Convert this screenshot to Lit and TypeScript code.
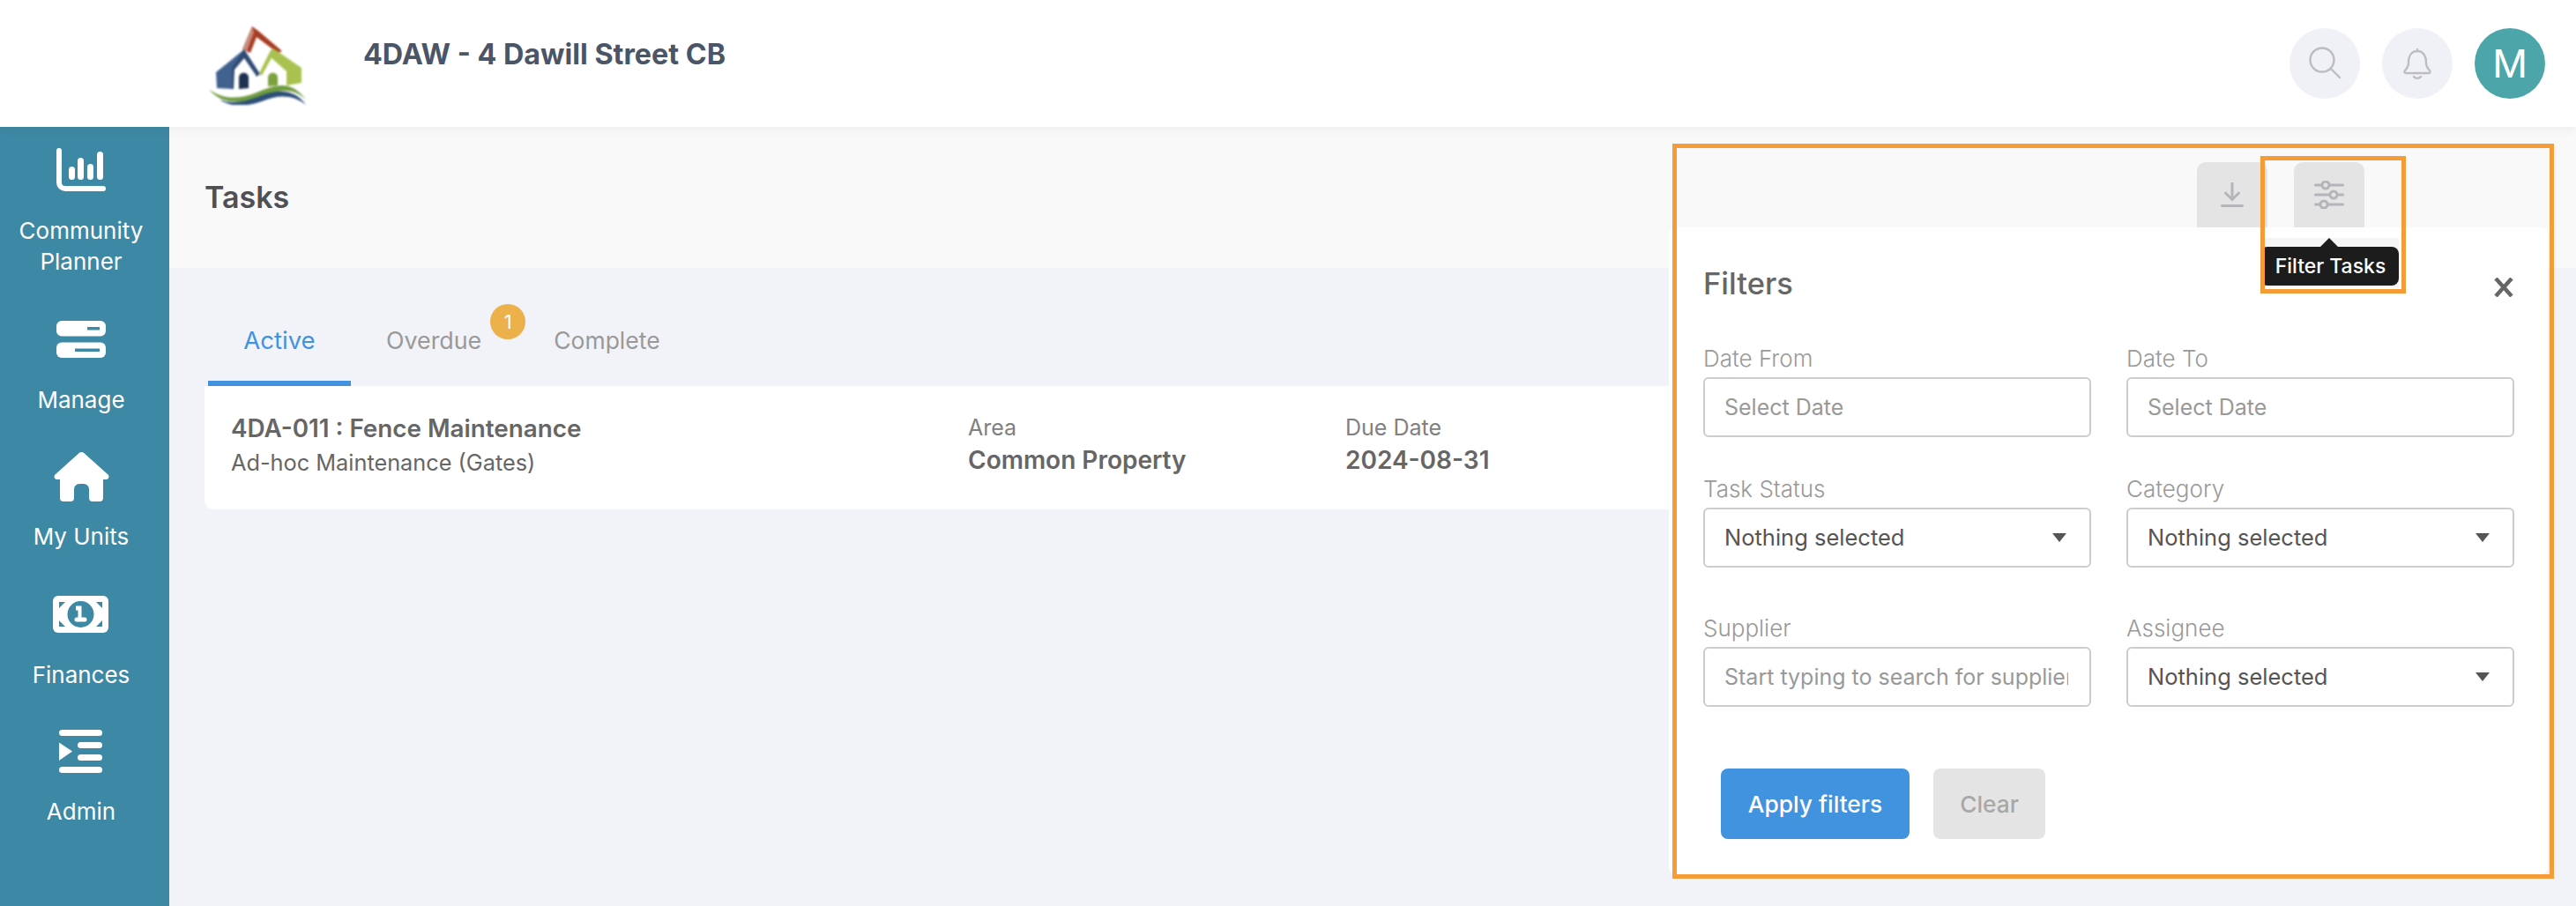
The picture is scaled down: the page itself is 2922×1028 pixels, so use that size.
import { LitElement, html, css, svg } from "lit";
import { customElement } from "lit/decorators.js";

const icons = {
  planner: svg`<svg class="ic" style="width:56px;height:49px" viewBox="0 0 56 49" fill="#fff">
    <path d="M0 3a3 3 0 0 1 6 0v36a4 4 0 0 0 4 4h43a3 3 0 0 1 0 6H10A10 10 0 0 1 0 39Z"/>
    <rect x="14" y="21" width="7" height="15" rx="3.5"/><rect x="24" y="11" width="7" height="25" rx="3.5"/>
    <rect x="35" y="18" width="7" height="18" rx="3.5"/><rect x="46" y="4" width="7" height="32" rx="3.5"/></svg>`,
  manage: svg`<svg class="ic" style="width:56px;height:42px" viewBox="0 0 56 42">
    <rect width="56" height="17.5" rx="6" fill="#fff"/><rect y="24.5" width="56" height="17.5" rx="6" fill="#fff"/>
    <rect x="35" y="7" width="14" height="3.5" fill="#3d88a4"/><rect x="21" y="31.5" width="28" height="3.5" fill="#3d88a4"/></svg>`,
  home: svg`<svg class="ic" style="width:63px;height:56px" viewBox="0 0 63 56" fill="#fff">
    <path d="M28.8 1a4 4 0 0 1 5.4 0L61.5 25.5C63.5 27.4 62.3 31 59.5 31H56V52a4 4 0 0 1-4 4H44a4 4 0 0 1-4-4V42a6 6 0 0 0-6-6H29a6 6 0 0 0-6 6V52a4 4 0 0 1-4 4H11a4 4 0 0 1-4-4V31H3.5C.7 31-.5 27.4 1.5 25.5Z"/></svg>`,
  money: svg`<svg class="ic" style="width:63px;height:42px" viewBox="0 0 63 42">
    <rect width="63" height="42" rx="6" fill="#fff"/>
    <circle cx="31.5" cy="21" r="15" fill="#3d88a4"/>
    <path d="M7 7h7l-7 7ZM56 7v7l-7-7ZM7 35v-7l7 7ZM56 35h-7l7-7Z" fill="#3d88a4"/>
    <path d="M26 12h6.500V25h3.500a2.500 2.500 0 0 1 0 5H27a2.500 2.500 0 0 1 0-5h1.500v-8H26Z" fill="#fff" transform="translate(0 -.5)"/></svg>`,
  admin: svg`<svg class="ic" style="width:49px;height:49px" viewBox="0 0 49 49" fill="#fff">
    <rect width="49" height="7" rx="3.5"/><rect x="21" y="14" width="28" height="7" rx="3.5"/>
    <rect x="21" y="28" width="28" height="7" rx="3.5"/><rect y="42" width="49" height="7" rx="3.5"/>
    <path d="M0 14.500 15 24.500 0 35Z"/></svg>`,
};

const logo = svg`<svg class="logo" viewBox="0 0 110 90">
  <path d="M49 1 56 6 83 29 78 31 54 13 47 31 38 27Z" fill="#a63c22"/>
  <path d="M49 1 38 27 43 29 51 8Z" fill="#c98a7a"/>
  <path d="M40 27 8 53 9 71 27 72 27 50 42 33Z" fill="#41628f"/>
  <path d="M40 27 58 55 54 58 40 37 29 50 28 72H26V48Z" fill="#2f4a74"/>
  <path d="M40 38 53 56 53 71 29 73 29 52Z" fill="#fff"/>
  <path d="M34 72V59a5.500 5.500 0 0 1 11 0V71Z" fill="#1d3150"/>
  <path d="M70 28 57 54 60 57 71 37 88 52 88 68 105 65V48L73 26Z" fill="#a9c24f"/>
  <path d="M71 37 87 52V66L60 70 60 57Z" fill="#fff"/>
  <path d="M67 69V59a5.500 5.500 0 0 1 11 0V68Z" fill="#7ba23c"/>
  <path d="M0 72C14 84 34 84 54 76 74 68 92 60 110 84 94 68 76 74 56 82 34 90 12 88 0 72Z" fill="#6f9c3f"/>
  <path d="M12 84C28 90 42 86 60 79 78 72 98 72 110 90 96 78 78 78 60 86 40 93 24 92 12 84Z" fill="#2d4f78"/>
</svg>`;

@customElement("app-root")
export class AppRoot extends LitElement {
  static styles = css`
    :host { display: block; width: 2922px; height: 1028px; overflow: hidden; position: relative; font-family: Inter, "Liberation Sans", sans-serif; background: #f1f3f8; }
    * { box-sizing: border-box; }
    .top { height: 144px; background: #fff; display: flex; align-items: center; padding: 0 35px 0 237px; box-shadow: 0 2px 12px rgba(0,0,0,.06); position: relative; z-index: 2; }
    .logo { width: 110px; height: 90px; filter: blur(.8px); margin-top: 4px; }
    .brand { margin-left: 65px; margin-bottom: 22px; font-size: 32.3px; font-weight: 700; color: #4a5568; white-space: nowrap; }
    .spacer { flex: 1; }
    .circle { width: 80px; height: 80px; border-radius: 50%; background: #f0f1f7; margin-left: 25px; display: flex; align-items: center; justify-content: center; }
    .circle svg { fill: none; stroke: #bdbdc0; stroke-width: 2.4; stroke-linecap: round; stroke-linejoin: round; width: 40px; height: 40px; }
    .avatar { background: #4ca5a9; color: #fff; font-size: 44px; font-weight: 400; }
    .body { display: flex; height: 884px; }
    .side { width: 192px; background: #3d88a4; display: flex; flex-direction: column; align-items: center; padding-right: 8px; color: #fff; font-size: 26px; line-height: 35px; text-align: center; }
    .nav { display: flex; flex-direction: column; align-items: center; }
    .nav .ic { display: block; }
    .nav span { display: block; white-space: nowrap; }
    .n1 { padding-top: 24px; } .n1 span { margin-top: 26.5px; }
    .n2 { padding-top: 50.5px; } .n2 span { margin-top: 29.5px; }
    .n3 { padding-top: 42.5px; } .n3 span { margin-top: 22px; }
    .n4 { padding-top: 50px; } .n4 span { margin-top: 29.5px; }
    .n5 { padding-top: 45.5px; } .n5 span { margin-top: 26px; }
    .main { flex: 1; min-width: 0; }
    .phead { height: 160px; background: #f9f9f9; padding: 60px 40px 0; font-size: 34px; font-weight: 600; color: #4f5055; line-height: 40px; }
    .tabs { display: flex; padding: 40px 0 0 44px; height: 134px; align-items: stretch; }
    .tab { position: relative; font-size: 26.5px; color: #999; padding: 24px 41px 0; border-bottom: 6px solid transparent; line-height: 36px; white-space: nowrap; }
    .tab.on { width: 162px; padding: 24px 0 0; text-align: center; font-size: 27.5px; color: #4193df; border-bottom-color: #4193df; }
    .tab.od { padding-left: 40px; padding-right: 41px; font-size: 26.8px; }
    .badge { position: absolute; top: 1px; right: -9px; width: 40px; height: 40px; border-radius: 50%; background: #edb14b; color: #fff; font-size: 22px; line-height: 40px; text-align: center; }
    .card { margin: 0 40px; height: 140px; background: #fff; border-radius: 0 0 10px 10px; padding: 30px; display: flex; color: #666; }
    .task { width: 836px; }
    .task b { display: block; font-size: 27.8px; font-weight: 600; line-height: 36px; white-space: nowrap; }
    .task i { display: block; font-style: normal; font-size: 25.3px; line-height: 36px; margin-top: 3px; white-space: nowrap; }
    .col { width: 428px; font-size: 25px; line-height: 36px; margin-top: -1px; color: #808080; }
    .col b { display: block; font-size: 28px; font-weight: 600; color: #666; margin-top: 1px; white-space: nowrap; }
    .panel { position: absolute; left: 1893px; top: 258px; width: 997px; height: 734px; background: #fff; border-radius: 8px; z-index: 3; padding: 44px 38px 0 39px; color: #666; }
    .ptitle { font-size: 34.5px; line-height: 40px; font-weight: 500; }
    .close { position: absolute; left: 936px; top: 57px; width: 22px; height: 22px; stroke: #666; stroke-width: 4.5; }
    .grid { display: grid; grid-template-columns: 440px 440px; column-gap: 40px; margin-top: 46px; }
    .fld label { display: block; font-size: 26px; font-weight: 300; line-height: 38px; color: #999; height: 40px; white-space: nowrap; }
    .box { height: 68px; border: 2px solid #ccc; border-radius: 6px; display: flex; align-items: center; padding: 0 22px; font-size: 25px; color: #999; overflow: hidden; white-space: nowrap; background: #fff; }
    .sel { font-size: 25.5px; color: #555; justify-content: space-between; padding: 0 26px 2px 22px; }
    .sel::after { content: ""; border: 8px solid transparent; border-top: 10px solid #555; border-bottom: 0; margin-top: 2px; }
    .clip { width: 390px; overflow: hidden; font-size: 25px; }
    .r2 { margin-top: 40px; } .r3 { margin-top: 50px; }
    .acts { display: flex; gap: 27px; margin: 70px 0 0 20px; }
    .btn { height: 80px; border-radius: 8px; font-size: 26.3px; display: flex; align-items: center; justify-content: center; }
    .apply { width: 214px; background: #4193df; color: #fff; font-weight: 500; }
    .clear { width: 127px; background: #e4e4e4; color: #a8a8a8; font-weight: 500; }
    .tool { position: absolute; top: 184px; width: 80px; height: 74px; background: #e4e4e4; border-radius: 10px 10px 0 0; z-index: 2; display: flex; align-items: center; justify-content: center; }
    .tool svg { fill: none; stroke: #b4b4bb; stroke-width: 3; stroke-linecap: round; }
    .tipband { position: absolute; left: 2569px; top: 270px; width: 152px; height: 56px; background: #f5f5f5; z-index: 3; }
    .tip { position: absolute; left: 2564px; top: 280px; width: 157px; height: 44px; background: #1c1c1c; border-radius: 8px; color: #fff; font-size: 23px; font-weight: 500; line-height: 44px; text-align: center; z-index: 4; padding-left: 2px; white-space: nowrap; }
    .tip::before { content: ""; position: absolute; left: 68px; top: -10px; border: 10px solid transparent; border-bottom-color: #1c1c1c; border-top: 0; }
    .mark { position: absolute; border: 5px solid #f59b38; z-index: 5; pointer-events: none; }
    .m1 { left: 1897px; top: 163px; width: 1000px; height: 834px; }
    .m2 { left: 2564px; top: 177px; width: 165px; height: 156px; }
  `;

  field(label: string, control: unknown, cls = "") {
    return html`<div class="fld ${cls}"><label>${label}</label>${control}</div>`;
  }

  render() {
    return html`
      <div class="top">
        ${logo}
        <div class="brand">4DAW - 4 Dawill Street CB</div>
        <div class="spacer"></div>
        <div class="circle"><svg viewBox="0 0 40 40"><circle cx="17" cy="16" r="13.5"/><path d="M27 26l10 10"/></svg></div>
        <div class="circle"><svg viewBox="0 0 40 40"><path d="M20 4v2M20 6c-7 0-10 6-10 13 0 5-2 7-4 9-1 1-1 3 1 3h26c2 0 2-2 1-3-2-2-4-4-4-9 0-7-3-13-10-13ZM16 35c2 2.5 6 2.5 8 0"/></svg></div>
        <div class="circle avatar">M</div>
      </div>
      <div class="body">
        <nav class="side">
          <div class="nav n1">${icons.planner}<span>Community<br />Planner</span></div>
          <div class="nav n2">${icons.manage}<span>Manage</span></div>
          <div class="nav n3">${icons.home}<span>My Units</span></div>
          <div class="nav n4">${icons.money}<span>Finances</span></div>
          <div class="nav n5">${icons.admin}<span>Admin</span></div>
        </nav>
        <main class="main">
          <div class="phead">Tasks</div>
          <div class="tabs">
            <div class="tab on">Active</div>
            <div class="tab od">Overdue<div class="badge">1</div></div>
            <div class="tab">Complete</div>
          </div>
          <div class="card">
            <div class="task"><b>4DA-011 : Fence Maintenance</b><i>Ad-hoc Maintenance (Gates)</i></div>
            <div class="col">Area<b>Common Property</b></div>
            <div class="col">Due Date<b>2024-08-31</b></div>
          </div>
        </main>
      </div>

      <div class="tool" style="left:2492px"><svg viewBox="0 0 26 28" width="26" height="28"><path d="M13 1v18M5.5 12l7.5 7.5 7.5-7.5M1.5 26.5h23"/></svg></div>
      <div class="tool" style="left:2602px"><svg viewBox="0 0 34 32" width="34" height="32"><path d="M1.5 5h31M1.5 16h31M1.5 27h31"/><g fill="#e4e4e4"><circle cx="13" cy="5" r="4"/><circle cx="22" cy="16" r="4"/><circle cx="11" cy="27" r="4"/></g></svg></div>

      <section class="panel">
        <div class="ptitle">Filters</div>
        <svg class="close" viewBox="0 0 22 22"><path d="M2 1l18 20M20 1L2 21"/></svg>
        <div class="grid">
          ${this.field("Date From", html`<div class="box">Select Date</div>`)}
          ${this.field("Date To", html`<div class="box">Select Date</div>`)}
          ${this.field("Task Status", html`<div class="box sel">Nothing selected</div>`, "r2")}
          ${this.field("Category", html`<div class="box sel">Nothing selected</div>`, "r2")}
          ${this.field("Supplier", html`<div class="box"><div class="clip">Start typing to search for suppliers</div></div>`, "r3")}
          ${this.field("Assignee", html`<div class="box sel">Nothing selected</div>`, "r3")}
        </div>
        <div class="acts"><div class="btn apply">Apply filters</div><div class="btn clear">Clear</div></div>
      </section>

      <div class="tipband"></div>
      <div class="tip">Filter Tasks</div>
      <div class="mark m1"></div>
      <div class="mark m2"></div>
    `;
  }
}
